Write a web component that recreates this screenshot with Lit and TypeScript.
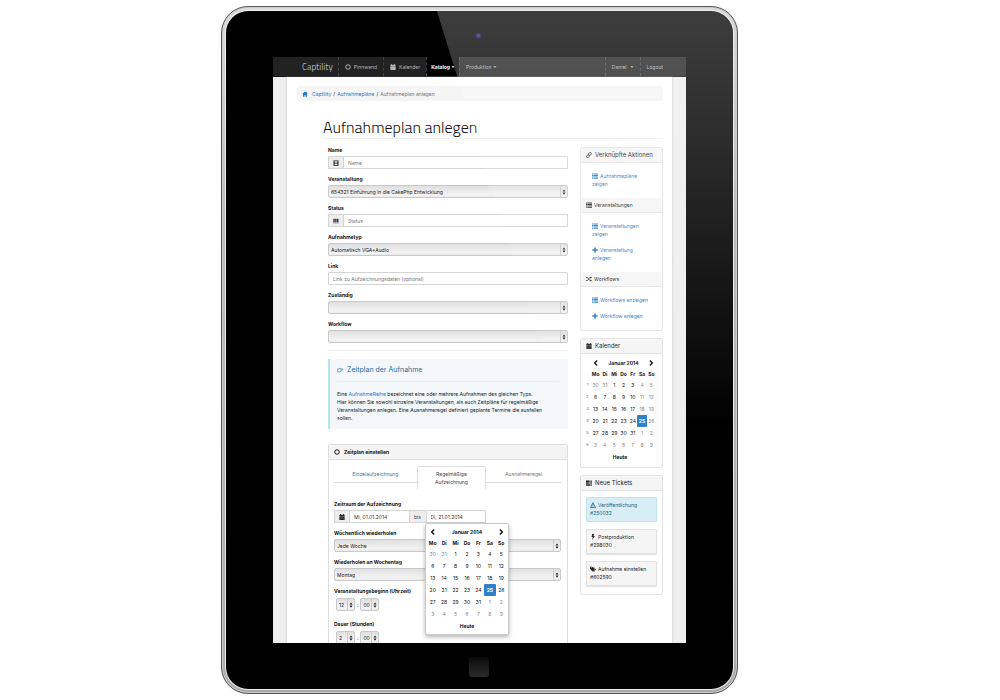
import { LitElement, html, css, svg, nothing } from "lit";
import { customElement, property } from "lit/decorators.js";
import { classMap } from "lit/directives/class-map.js";

const shapes: Record<string, unknown> = {
  home: svg`<path d="M8 1 0.5 8.3h2.3V15h3.8v-4.5h2.8V15h3.8V8.3h2.3L13 5.9V2h-2v2z"/>`,
  clock: svg`<circle cx="8" cy="8" r="6" fill="none" stroke="currentColor" stroke-width="2.6"/>`,
  calendar: svg`<path d="M1 2h2V0h2v2h6V0h2v2h2v3H1zM1 6h14v10H1z"/><path d="M1 9h14M1 12.500h14M4.500 6v10M8 6v10M11.500 6v10" stroke="#fff" stroke-opacity=".35" stroke-width=".6"/>`,
  film: svg`<path fill-rule="evenodd" d="M1 1h14v14H1zM5 3v4h6V3zM5 9v4h6V9zM2 3v2h1.500V3zM2 7v2h1.500V7zM2 11v2h1.500v-2zM12.500 3v2H14V3zM12.500 7v2H14V7zM12.500 11v2H14v-2z"/>`,
  bars: svg`<path d="M1 2h3.500v9H1zM6 2h3.500v9H6zM11 2h3.500v9H11zM1 12.500h3.500V14H1zM6 12.500h3.500V14H6zM11 12.500h3.500V14H11z"/>`,
  list: svg`<path d="M0 1h4v3H0zM5 1h11v3H5zM0 5h4v3H0zM5 5h11v3H5zM0 9h4v3H0zM5 9h11v3H5zM0 13h4v2.500H0zM5 13h11v2.500H5z"/>`,
  tasks: svg`<path fill-rule="evenodd" d="M0 1h16v4H0zM9 2.300v1.400h5.500V2.300zM0 6h16v4H0zM6 7.300v1.400h8.500V7.300zM0 11h16v4H0zM11 12.300v1.400h3.500v-1.400z"/>`,
  plus: svg`<path d="M6 1h4v5h5v4h-5v5H6v-5H1V6h5z"/>`,
  link: svg`<g fill="none" stroke="currentColor" stroke-width="2" transform="rotate(-50 8 8)"><rect x="-.5" y="5" width="9" height="6" rx="3"/><rect x="7" y="5" width="9" height="6" rx="3"/></g>`,
  shuffle: svg`<path d="M0 4h4l6 8h3M0 12h4l6-8h3" fill="none" stroke="currentColor" stroke-width="2"/><path d="M12 1l4 3-4 3zM12 9l4 3-4 3z"/>`,
  warning: svg`<path fill-rule="evenodd" d="M8 0l8 15H0zM8 4L3.300 13h9.400zM7 7h2v3H7zM7 11h2v1.500H7z"/>`,
  bolt: svg`<path d="M6 0h5L9 5h4L6 16l1.500-8H4z"/>`,
  tags: svg`<path fill-rule="evenodd" d="M0 2h6l7 7-5 6-8-8zM2.500 3.500v2h2v-2z"/><path d="M8 2h1.500L16 9l-5 6-1-1 4-5z"/>`,
  hand: svg`<path d="M1 5.500h4l3-3 1.500 3H14a1.500 1.500 0 0 1 0 3h-3.500v2L9 13H4.500L1 11z" fill="none" stroke="currentColor" stroke-width="1.700"/>`,
  prev: svg`<path d="M11 1.500 4.500 8l6.500 6.500" fill="none" stroke="currentColor" stroke-width="3.800"/>`,
  next: svg`<path d="M5 1.500 11.500 8 5 14.500" fill="none" stroke="currentColor" stroke-width="3.800"/>`,
  updown: svg`<path d="M4 6.500 8 1l4 5.500zM4 9.500 8 15l4-5.500z"/>`,
  caret: svg`<path d="M2 5h12l-6 7z"/>`,
};

const icon = (name: string) =>
  html`<svg class="icon ${name}" viewBox="0 0 16 16" aria-hidden="true">${shapes[name]}</svg>`;

const base = css`
  *, *::before, *::after { box-sizing: border-box; }
  .icon { width: 6px; height: 6px; fill: currentColor; flex: none; vertical-align: -1px; }
  a { color: #1f78c8; text-decoration: none; }
  button { font: inherit; color: inherit; background: none; border: 0; padding: 0; cursor: pointer; }
`;

@customElement("month-grid")
export class MonthGrid extends LitElement {
  @property({ type: Boolean }) weeks = false;

  static styles = [base, css`
    :host { display: block; }
    table { width: 100%; table-layout: fixed; border-collapse: collapse; font-size: 5px; line-height: 8px; text-align: center; color: #111; }
    th, td { padding: 0; height: 12px; overflow: visible; }
    thead th { height: 11px; }
    th { font-weight: 700; }
    button { display: block; width: 100%; }
    .muted { color: #888; }
    .week { width: 7px; color: #666; font-size: 4px; }
    .today { background: #2f80c8; color: #fff; font-weight: 700; border-radius: 1px; }
  `];

  render() {
    const days = Array.from({ length: 42 }, (_, i) => new Date(2013, 11, 30 + i));
    const rows = Array.from({ length: 6 }, (_, i) => days.slice(i * 7, i * 7 + 7));
    const span = this.weeks ? html`<th class="week"></th>` : nothing;
    return html`
      <table>
        <thead>
          <tr>
            ${span}
            <th><button aria-label="Voriger Monat">${icon("prev")}</button></th>
            <th colspan="5">Januar 2014</th>
            <th><button aria-label="Nächster Monat">${icon("next")}</button></th>
          </tr>
          <tr>${span}${["Mo", "Di", "Mi", "Do", "Fr", "Sa", "So"].map((d) => html`<th>${d}</th>`)}</tr>
        </thead>
        <tbody>
          ${rows.map((row, r) => html`<tr>
            ${this.weeks ? html`<td class="week">${r + 1}</td>` : nothing}
            ${row.map((d, c) => {
              const inMonth = d.getMonth() === 0;
              return html`<td class=${classMap({
                muted: !inMonth || (this.weeks && c > 4),
                today: inMonth && d.getDate() === 25,
              })}>${d.getDate()}</td>`;
            })}
          </tr>`)}
        </tbody>
        <tfoot><tr><th colspan=${this.weeks ? 8 : 7}><button>Heute</button></th></tr></tfoot>
      </table>`;
  }
}

@customElement("side-bar")
export class SideBar extends LitElement {
  static styles = [base, css`
    :host { display: flex; flex-direction: column; gap: 7px; padding-top: 1px; font-size: 5px; line-height: 8px; }
    .panel { border: 1px solid #e4e4e4; border-radius: 2px; background: #fff; }
    .head { margin: 0; height: 15px; padding: 0 5px; display: flex; align-items: center; gap: 3px; background: #f5f5f5; border-bottom: 1px solid #e4e4e4; font-weight: 400; font-size: 6px; color: #222; }
    .sub { font-size: 5px; gap: 2px; }
    .links { list-style: none; margin: 0; padding: 9px 10px 10px 11px; display: flex; flex-direction: column; gap: 8px; }
    .links .icon, .ticket .icon { margin-right: 2px; }
    month-grid { padding: 3px 6px 4px 3px; }
    .tickets { padding: 6px 5px 8px; display: flex; flex-direction: column; gap: 7px; }
    .ticket { display: block; padding: 3px 3px 4px; border: 1px solid #e2e2e2; border-radius: 1px; background: #f5f5f5; color: #222; box-shadow: 0 1px 1px #ddd; }
    .hot { background: #d9edf7; border-color: #bfe3f0; color: #1f6085; box-shadow: none; }
  `];

  render() {
    const item = (i: string, text: string) => html`<li><a href="#">${icon(i)}${text}</a></li>`;
    return html`
      <section class="panel">
        <h2 class="head">${icon("link")}Verknüpfte Aktionen</h2>
        <ul class="links">${item("list", "Aufnahmepläne zeigen")}</ul>
        <h3 class="head sub">${icon("list")}Veranstaltungen</h3>
        <ul class="links">${item("list", "Veranstaltungen zeigen")}${item("plus", "Veranstaltung anlegen")}</ul>
        <h3 class="head sub">${icon("shuffle")}Workflows</h3>
        <ul class="links">${item("list", "Workflows anzeigen")}${item("plus", "Workflow anlegen")}</ul>
      </section>
      <section class="panel">
        <h2 class="head">${icon("calendar")}Kalender</h2>
        <month-grid weeks></month-grid>
      </section>
      <section class="panel">
        <h2 class="head">${icon("tasks")}Neue Tickets</h2>
        <div class="tickets">
          <a class="ticket hot" href="#">${icon("warning")}Veröffentlichung<br />#250032</a>
          <a class="ticket" href="#">${icon("bolt")}Postproduktion<br />#298030</a>
          <a class="ticket" href="#">${icon("tags")}Aufnahme einstellen<br />#602590</a>
        </div>
      </section>`;
  }
}

@customElement("plan-form")
export class PlanForm extends LitElement {
  static styles = [base, css`
    :host { display: block; font-size: 5px; line-height: 8px; color: #222; }
    .fields { display: flex; flex-direction: column; gap: 6px; }
    .field { display: flex; flex-direction: column; gap: 2px; }
    label { font-weight: 700; color: #111; }
    .row { display: flex; height: 13px; }
    .addon { width: 16px; flex: none; display: flex; align-items: center; justify-content: center; border: 1px solid #d4d4d4; background: #eee; }
    .addon + input { border-left: 0; }
    input { font: inherit; color: #333; flex: 1; min-width: 0; width: 100%; height: 13px; padding: 0 4px; border: 1px solid #d4d4d4; border-radius: 1px; background: #fff; outline: 0; }
    input::placeholder { color: #777; opacity: 1; }
    .pick { position: relative; display: block; height: 13px; }
    select { appearance: none; font: inherit; color: #222; width: 100%; height: 13px; padding: 0 12px 0 2px; border: 1px solid #c9c9c9; border-radius: 2px; background: linear-gradient(#e0e0e0, #f3f3f3 80%, #ececec); display: block; }
    .pick::after { content: ""; position: absolute; right: 7px; top: 1px; bottom: 1px; border-left: 1px solid #ccc; }
    .pick .icon { position: absolute; right: 1px; top: 4px; pointer-events: none; }
    hr { border: 0; border-top: 1px solid #eee; margin: 7px 0 8px; }
    .info { padding: 7px 8px 7px 7px; border-left: 2px solid #b5e6f0; background: #f3f7fa; }
    .info h2 { margin: 0; font-size: 7px; line-height: 8px; font-weight: 400; color: #1f6f9a; display: flex; gap: 4px; align-items: center; }
    .info p { margin: 0; white-space: nowrap; }
    .plan { margin-top: 15px; border: 1px solid #ddd; border-radius: 2px; }
    .plan-head { margin: 0; height: 15px; padding: 0 5px; display: flex; align-items: center; gap: 4px; background: #f4f4f4; border-bottom: 1px solid #ddd; font-size: 5px; color: #111; }
    .plan-body { padding: 6px 6px 20px 5px; }
    .tabs { display: grid; grid-template-columns: 83fr 70fr 75fr; height: 23px; margin-bottom: 11px; text-align: center; }
    .tab { height: 17px; padding: 4px 10px; border-bottom: 1px solid #ddd; }
    .tab.on { height: 23px; padding: 3px 10px; border: 1px solid #ddd; border-bottom: 0; border-radius: 2px 2px 0 0; color: #444; }
    .tab.off { color: #777; }
    .range { position: relative; width: 152px; }
    .range input { flex: 1 1 0; }
    .bis { border-left: 0; border-right: 0; font-weight: 400; color: #444; }
    .bis + input { border-left: 1px solid #d4d4d4; }
    .popup { position: absolute; z-index: 2; top: 13px; left: 91px; width: 84px; padding: 2px 1px; background: #fff; border: 1px solid #ccc; border-radius: 2px; box-shadow: 0 2px 4px rgba(0, 0, 0, .3); }
    .time { display: flex; align-items: center; gap: 2px; padding: 0 0 0 2px; height: 15px; margin-bottom: 2px; }
    .time .pick { width: 19px; }
    .time select { padding: 0 7px 0 2px; }
  `];

  private select(id: string, label: string, value = "") {
    return html`<div class="field"><label for=${id}>${label}</label>
      <span class="pick"><select id=${id}><option>${value}</option></select>${icon("updown")}</span></div>`;
  }

  private text(id: string, label: string, hint: string, glyph?: string) {
    return html`<div class="field"><label for=${id}>${label}</label>
      <div class="row">${glyph ? html`<span class="addon">${icon(glyph)}</span>` : nothing}<input id=${id} type="text" placeholder=${hint} /></div></div>`;
  }

  private time(id: string, label: string, hour: string) {
    return html`<div class="field"><label for=${id}>${label}</label>
      <div class="time">
        <span class="pick"><select id=${id}><option>${hour}</option></select>${icon("updown")}</span>:
        <span class="pick"><select aria-label="Minuten"><option>00</option></select>${icon("updown")}</span>
      </div></div>`;
  }

  render() {
    return html`
      <form>
        <div class="fields">
          ${this.text("name", "Name", "Name", "film")}
          ${this.select("event", "Veranstaltung", "654321 Einführung in die CakePhp Entwicklung")}
          ${this.text("status", "Status", "Status", "bars")}
          ${this.select("type", "Aufnahmetyp", "Automatisch VGA+Audio")}
          ${this.text("link", "Link", "Link zu Aufzeichnungsdaten (optional)")}
          ${this.select("owner", "Zuständig")}
          ${this.select("workflow", "Workflow")}
        </div>
        <hr />
        <section class="info">
          <h2>${icon("hand")}Zeitplan der Aufnahme</h2>
          <hr />
          <p>Eine <a href="#">AufnahmeReihe</a> bezeichnet eine oder mehrere Aufnahmen des gleichen Typs.<br />
          Hier können Sie sowohl einzelne Veranstaltungen, als auch Zeitpläne für regelmäßige<br />
          Veranstaltungen anlegen. Eine Ausnahmeregel definiert geplante Termine die ausfallen<br />
          sollen.</p>
        </section>
        <section class="plan">
          <h2 class="plan-head">${icon("clock")}Zeitplan einstellen</h2>
          <div class="plan-body">
            <nav class="tabs">
              <a class="tab" href="#">Einzelaufzeichnung</a>
              <a class="tab on" href="#">Regelmäßige Aufzeichnung</a>
              <a class="tab off" href="#">Ausnahmeregel</a>
            </nav>
            <div class="fields">
              <div class="field">
                <label for="from">Zeitraum der Aufzeichnung</label>
                <div class="row range">
                  <span class="addon">${icon("calendar")}</span><input id="from" type="text" .value=${"Mi, 01.01.2014"} />
                  <label class="addon bis" for="to">bis</label><input id="to" type="text" .value=${"Di, 21.01.2014"} />
                  <div class="popup"><month-grid></month-grid></div>
                </div>
              </div>
              ${this.select("weekly", "Wöchentlich wiederholen", "Jede Woche")}
              ${this.select("weekday", "Wiederholen an Wochentag", "Montag")}
              ${this.time("start", "Veranstaltungsbeginn (Uhrzeit)", "12")}
              ${this.time("length", "Dauer (Stunden)", "2")}
            </div>
          </div>
        </section>
      </form>`;
  }
}

@customElement("app-root")
export class AppRoot extends LitElement {
  static styles = [base, css`
    :host { display: flex; justify-content: center; height: 100vh; box-sizing: border-box; padding: 6px 41px 6px 0; background: #fff; font-family: Inter, "Noto Sans", sans-serif; font-size: 5px; line-height: 8px; color: #222; }
    .device { width: 100%; max-width: 517px; display: flex; padding: 4px; border: 1px solid #555; border-radius: 27px; background: linear-gradient(#dcdcdc, #bbb 30%, #aaa); box-shadow: inset 0 0 0 1px #ccc; }
    .bezel { position: relative; flex: 1; min-width: 0; display: grid; grid-template-rows: 46px minmax(0, 1fr) 46px; padding: 0 47px; background: #000; border-radius: 22px; overflow: hidden; box-shadow: 0 0 0 1px #eee; }
    .gloss { position: absolute; inset: 0; z-index: 5; pointer-events: none; clip-path: polygon(41.6% 0, 100% 0, 100% 100%, 83% 100%); background: linear-gradient(rgba(255, 255, 255, .24), rgba(255, 255, 255, .19) 15%, transparent 62%); }
    .camera { align-self: center; justify-self: center; width: 8px; height: 8px; margin: 4px 3px 0 0; border: 1px solid #000; border-radius: 50%; background: radial-gradient(circle at 60% 40%, #3a2aa0, #101040 50%, #000 80%); }
    .home-button { align-self: center; justify-self: center; width: 20px; height: 20px; margin: 2px 1px 0 0; border-radius: 3px; background: linear-gradient(#0a0a0a, #2c2c2c); }
    .screen { overflow: hidden; background: #eee; display: flex; flex-direction: column; }
    .bar { flex: none; height: 20px; display: flex; align-items: stretch; padding: 0 17px 0 23px; background: #222; border-bottom: 1px solid #111; color: #aaa; }
    .brand { display: flex; align-items: center; padding: 0 5px 0 6px; font: 9px "Titillium Web", Roboto, sans-serif; }
    .bar a { color: #b4b4b4; }
    .nav { display: flex; align-items: center; gap: 3px; padding: 0 6px; border-left: 1px dashed #444; }
    .bar .on { background: #000; color: #fff; font-weight: 700; gap: 1px; padding: 0 4px; }
    .nav .caret { width: 4px; height: 4px; }
    .menu { gap: 1px; }
    .gap { flex: 1; }
    .page { flex: none; margin: 0 13px; padding: 9px 9px 0 10px; background: #fff; border: 1px solid #ddd; border-width: 0 1px; box-shadow: 0 0 1px #ccc; }
    .crumbs { height: 15px; display: flex; align-items: center; gap: 2px; padding: 0 5px; background: #f5f5f5; border-radius: 2px; }
    .crumbs .icon { margin-right: 2px; color: #1f78c8; }
    .crumbs span { color: #777; }
    h1 { margin: 16px 0 0 26px; height: 22px; border-bottom: 1px solid #eee; font: 300 16px/20px "Titillium Web", Roboto, sans-serif; color: #111; }
    .cols { display: grid; grid-template-columns: minmax(0, 1fr) 83px; gap: 12px; margin-left: 31px; padding-top: 7px; }
  `];

  render() {
    return html`
      <div class="device">
        <div class="bezel">
          <span class="camera"></span>
          <div class="screen">
            <nav class="bar">
              <a class="brand" href="#">Captility</a>
              <a class="nav" href="#">${icon("clock")}Pinnwand</a>
              <a class="nav" href="#">${icon("calendar")}Kalender</a>
              <a class="nav on" href="#">Katalog${icon("caret")}</a>
              <a class="nav menu" href="#">Produktion${icon("caret")}</a>
              <span class="gap"></span>
              <a class="nav" href="#">Daniel ${icon("caret")}</a>
              <a class="nav" href="#">Logout</a>
            </nav>
            <main class="page">
              <nav class="crumbs">${icon("home")}<a href="#">Captility</a>/<a href="#">Aufnahmepläne</a>/<span>Aufnahmeplan anlegen</span></nav>
              <h1>Aufnahmeplan anlegen</h1>
              <div class="cols"><plan-form></plan-form><side-bar></side-bar></div>
            </main>
          </div>
          <span class="home-button"></span>
          <div class="gloss"></div>
        </div>
      </div>`;
  }
}
